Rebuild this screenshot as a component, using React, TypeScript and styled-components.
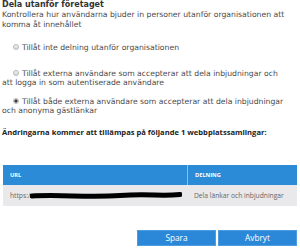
import React from "react";
import styled, { createGlobalStyle } from "styled-components";

const GlobalStyle = createGlobalStyle`
  html, body {
    margin: 0;
    padding: 0;
    background: #fff;
  }
  body {
    width: 300px;
    height: 248px;
    overflow: hidden;
  }
`;

const Page = styled.div`
  padding: 0 3px 0 2px;
  font-family: "DejaVu Sans", Verdana, sans-serif;
  color: #4a4a4a;
`;

const Title = styled.div`
  font-size: 8px;
  font-weight: bold;
  color: #333;
  line-height: 10px;
`;

const Description = styled.div`
  font-size: 7.7px;
  line-height: 10px;
  white-space: nowrap;
`;

const Option = styled.label<{ gap: number }>`
  display: block;
  font-size: 7.7px;
  line-height: 9px;
  margin-top: ${(p) => p.gap}px;
  white-space: nowrap;
`;

const Radio = styled.span<{ checked?: boolean }>`
  display: inline-block;
  box-sizing: border-box;
  width: 6px;
  height: 6px;
  margin: 0 3px 0 11px;
  border-radius: 50%;
  border: 1px solid #b8b8b8;
  background: ${(p) =>
    p.checked
      ? "radial-gradient(circle, #3a3a3a 0 1.3px, #e2e2e2 1.9px)"
      : "linear-gradient(#f0f0f0, #d8d8d8)"};
  vertical-align: 0;
`;

const SectionHeading = styled.div`
  font-family: "Open Sans", "Noto Sans", sans-serif;
  font-weight: bold;
  font-size: 7.6px;
  color: #222;
  margin-top: 12px;
  line-height: 10px;
`;

const Table = styled.div`
  margin: 28px 0 0 1px;
  font-family: "Open Sans", "Noto Sans", sans-serif;
`;

const Row = styled.div<{ header?: boolean }>`
  display: grid;
  grid-template-columns: 184px 1fr;
  height: ${(p) => (p.header ? 20 : 21)}px;
  background: ${(p) => (p.header ? "#2b8bd6" : "#e9e9eb")};
  color: ${(p) => (p.header ? "#fff" : "#666")};
  font-size: ${(p) => (p.header ? 5.7 : 6.7)}px;
  font-weight: ${(p) => (p.header ? 700 : 400)};
`;

const Cell = styled.div<{ divider?: boolean }>`
  display: flex;
  align-items: center;
  padding-left: 7px;
  white-space: nowrap;
  overflow: hidden;
  border-left: ${(p) => (p.divider ? "1px solid rgba(255,255,255,0.45)" : "none")};
`;

const Buttons = styled.div`
  display: flex;
  justify-content: flex-end;
  gap: 2px;
  margin-top: 24px;
`;

const Button = styled.button`
  width: 79px;
  height: 16px;
  padding: 0;
  border: 1px solid #4d9de0;
  background: #2b88d8;
  color: #fff;
  font-family: "Open Sans", "Noto Sans", sans-serif;
  font-size: 8.3px;
  line-height: 14px;
`;

const Redaction = () => (
  <svg width="152" height="10" viewBox="0 0 152 10">
    <path
      d="M2 5 C 30 3.5, 60 6.5, 90 4.5 S 130 5.5, 150 3.5"
      stroke="#000"
      strokeWidth="5"
      strokeLinecap="round"
      fill="none"
    />
  </svg>
);

export default function App() {
  return (
    <>
      <GlobalStyle />
      <Page>
        <Title>Dela utanför företaget</Title>
        <Description>
          Kontrollera hur användarna bjuder in personer utanför organisationen att
          <br />
          komma åt innehållet
        </Description>
        <Option gap={13}>
          <Radio />
          Tillåt inte delning utanför organisationen
        </Option>
        <Option gap={17}>
          <Radio />
          Tillåt externa användare som accepterar att dela inbjudningar och
          <br />
          att logga in som autentiserade användare
        </Option>
        <Option gap={10}>
          <Radio checked />
          Tillåt både externa användare som accepterar att dela inbjudningar
          <br />
          och anonyma gästlänkar
        </Option>
        <SectionHeading>
          Ändringarna kommer att tillämpas på följande 1 webbplatssamlingar:
        </SectionHeading>
        <Table>
          <Row header>
            <Cell>URL</Cell>
            <Cell divider>DELNING</Cell>
          </Row>
          <Row>
            <Cell>
              https:/
              <Redaction />
            </Cell>
            <Cell>Dela länkar och inbjudningar</Cell>
          </Row>
        </Table>
        <Buttons>
          <Button>Spara</Button>
          <Button>Avbryt</Button>
        </Buttons>
      </Page>
    </>
  );
}
